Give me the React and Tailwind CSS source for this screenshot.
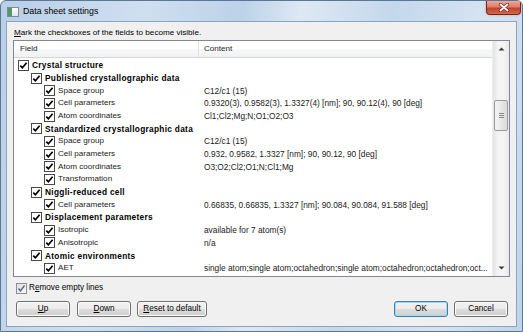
import React from 'react';

const rows = [
  { level: 0, label: 'Crystal structure', bold: true },
  { level: 1, label: 'Published crystallographic data', bold: true },
  { level: 2, label: 'Space group', content: 'C12/c1 (15)' },
  { level: 2, label: 'Cell parameters', content: '0.9320(3), 0.9582(3), 1.3327(4) [nm]; 90, 90.12(4), 90 [deg]' },
  { level: 2, label: 'Atom coordinates', content: 'Cl1;Cl2;Mg;N;O1;O2;O3' },
  { level: 1, label: 'Standardized crystallographic data', bold: true },
  { level: 2, label: 'Space group', content: 'C12/c1 (15)' },
  { level: 2, label: 'Cell parameters', content: '0.932, 0.9582, 1.3327 [nm]; 90, 90.12, 90 [deg]' },
  { level: 2, label: 'Atom coordinates', content: 'O3;O2;Cl2;O1;N;Cl1;Mg' },
  { level: 2, label: 'Transformation' },
  { level: 1, label: 'Niggli-reduced cell', bold: true },
  { level: 2, label: 'Cell parameters', content: '0.66835, 0.66835, 1.3327 [nm]; 90.084, 90.084, 91.588 [deg]' },
  { level: 1, label: 'Displacement parameters', bold: true },
  { level: 2, label: 'Isotropic', content: 'available for 7 atom(s)' },
  { level: 2, label: 'Anisotropic', content: 'n/a' },
  { level: 1, label: 'Atomic environments', bold: true },
  { level: 2, label: 'AET', content: 'single atom;single atom;octahedron;single atom;octahedron;octahedron;oct...' },
  // next row, only its top edge shows at the bottom of the list
  { level: 0, label: '', bold: true },
];

const indent = ['pl-[4px]', 'pl-[17px]', 'pl-[30px]'];

const TreeCheck = () => (
  <span className="w-[11px] h-[11px] shrink-0 border border-[#4a4a4a] bg-white flex items-center justify-center">
    <svg width="9" height="9" viewBox="0 0 9 9">
      <path d="M1.3 4.6 L3.4 6.8 L7.6 1.8" fill="none" stroke="#000" strokeWidth="1.7" />
    </svg>
  </span>
);

const VistaButton = ({ children, width = 'w-[54px]', isDefault }) => (
  <button
    className={`${width} h-[16px] rounded-[3px] border ${
      isDefault ? 'border-[#3c7fb1] shadow-[inset_0_0_0_1px_#a6d6f4]' : 'border-[#707070] shadow-[inset_0_0_0_1px_#fbfbfb]'
    } bg-[linear-gradient(180deg,#f2f2f2_0%,#ebebeb_50%,#dddddd_51%,#cfcfcf_100%)] text-[8.2px] leading-none text-black flex items-center justify-center`}
  >
    {children}
  </button>
);

export default function App() {
  return (
    <div className="w-[523px] h-[332px] overflow-hidden font-['Liberation_Sans',Arial,sans-serif] text-black bg-[linear-gradient(100deg,#b8cfe8_0%,#cfdff0_25%,#bcd2ea_42%,#dde8f4_52%,#c4d8ec_68%,#d6e4f2_85%,#bfd4ea_100%)] border border-[#5d7693] rounded-t-[6px] flex flex-col">
      {/* Title bar */}
      <div className="h-[20px] shrink-0 flex items-start">
        <div className="mt-[6px] ml-[6px] w-[12px] h-[10px] border border-[#7f8b99] bg-[#f4f6f8] flex">
          <span className="w-[4px] bg-[#4f9a6a]" />
          <span className="flex-1 bg-[linear-gradient(180deg,#ffffff,#dfe5ec)]" />
        </div>
        <span className="ml-[4px] mt-[5px] text-[8.8px] leading-[11px] text-black">Data sheet settings</span>
        <div className="ml-auto mr-[1px] w-[35px] h-[14px] rounded-b-[4px] border border-t-0 border-[#6b2a1f] bg-[linear-gradient(180deg,#eba99a_0%,#db7f6b_45%,#c4422a_55%,#d2684a_100%)] shadow-[0_0_3px_#e89a86] flex items-center justify-center">
          <svg width="12" height="9" viewBox="0 0 12 9">
            <path d="M2.5 1.5 L9.5 7.5 M9.5 1.5 L2.5 7.5" stroke="#6a2418" strokeWidth="3.2" strokeLinecap="round" />
            <path d="M2.5 1.5 L9.5 7.5 M9.5 1.5 L2.5 7.5" stroke="#ffffff" strokeWidth="1.8" strokeLinecap="round" />
          </svg>
        </div>
      </div>

      {/* Client area */}
      <div className="mx-[5px] h-[306px] shrink-0 bg-[#f0f0f0] border border-[#8ca3bf] flex flex-col">
        <p className="ml-[7px] mt-[6px] text-[8.1px] leading-[10px]">
          <span className="underline">M</span>ark the checkboxes of the fields to become visible.
        </p>

        {/* List */}
        <div className="ml-[6px] mt-[2px] w-[497px] h-[237px] border border-[#828790] bg-white flex overflow-hidden">
          <div className="w-[478px] flex flex-col overflow-hidden">
            <div className="h-[17px] shrink-0 flex border-b border-[#d5d5d5] bg-[linear-gradient(180deg,#ffffff_0%,#ffffff_50%,#f7f8fa_51%,#f1f2f4_100%)] text-[8.1px] text-[#1e1e1e]">
              <div className="w-[185px] pl-[6px] flex items-center border-r border-[#dfe3e8]">Field</div>
              <div className="pl-[5px] flex items-center">Content</div>
            </div>
            <div className="pt-[1px]">
              {rows.map((r, i) => (
                <div key={i} className="h-[12.7px] flex items-center">
                  <div className={`w-[185px] shrink-0 flex items-center gap-[3px] ${indent[r.level]}`}>
                    <TreeCheck />
                    {r.label && (
                      <span
                        className={
                          r.bold
                            ? 'font-bold text-[8.3px] tracking-[0.3px] leading-none whitespace-nowrap'
                            : 'text-[8.1px] leading-none whitespace-nowrap text-[#1a1a1a]'
                        }
                      >
                        {r.label}
                      </span>
                    )}
                  </div>
                  {r.content && (
                    <span className="pl-[5px] text-[8.3px] leading-none whitespace-nowrap text-[#1a1a1a]">{r.content}</span>
                  )}
                </div>
              ))}
            </div>
          </div>

          {/* Scrollbar */}
          <div className="w-[17px] shrink-0 bg-[linear-gradient(90deg,#e3e3e3,#f4f4f4_30%,#f4f4f4_70%,#e8e8e8)] border-l border-[#ececec] flex flex-col">
            <div className="h-[16px] flex items-center justify-center">
              <svg width="7" height="4" viewBox="0 0 7 4"><path d="M0.5 3.5 L3.5 0.5 L6.5 3.5 Z" fill="#3c3c3c" /></svg>
            </div>
            <div className="mt-[43px] mx-[1px] h-[31px] rounded-[2px] border border-[#9b9b9b] bg-[linear-gradient(90deg,#f3f3f3,#e8e8e8_50%,#d9d9d9)] flex flex-col items-center justify-center gap-[1px]">
              <span className="w-[5px] h-[1px] bg-[#8a8a8a]" />
              <span className="w-[5px] h-[1px] bg-[#8a8a8a]" />
              <span className="w-[5px] h-[1px] bg-[#8a8a8a]" />
            </div>
            <div className="flex-1" />
            <div className="h-[16px] flex items-center justify-center">
              <svg width="7" height="4" viewBox="0 0 7 4"><path d="M0.5 0.5 L3.5 3.5 L6.5 0.5 Z" fill="#3c3c3c" /></svg>
            </div>
          </div>
        </div>

        {/* Remove empty lines */}
        <div className="ml-[9px] mt-[6px] h-[11px] flex items-center gap-[2px]">
          <span className="w-[11px] h-[11px] border border-[#8e8f8f] bg-[linear-gradient(135deg,#dcdcdc,#fbfbfb)] flex items-center justify-center">
            <svg width="9" height="9" viewBox="0 0 9 9">
              <path d="M1.5 4.5 L3.5 7 L7.5 1.5" fill="none" stroke="#4a5f92" strokeWidth="1.3" />
            </svg>
          </span>
          <span className="text-[8.2px] leading-none">
            R<span className="underline">e</span>move empty lines
          </span>
        </div>

        {/* Buttons */}
        <div className="ml-[9px] mr-[8px] mt-[7px] flex items-center">
          <VistaButton><span className="underline">U</span>p</VistaButton>
          <span className="w-[7px]" />
          <VistaButton><span className="underline">D</span>own</VistaButton>
          <span className="w-[6px]" />
          <VistaButton width="w-[70px]"><span className="underline">R</span>eset to default</VistaButton>
          <span className="flex-1" />
          <VistaButton isDefault>OK</VistaButton>
          <span className="w-[6px]" />
          <VistaButton>Cancel</VistaButton>
        </div>
      </div>
    </div>
  );
}
